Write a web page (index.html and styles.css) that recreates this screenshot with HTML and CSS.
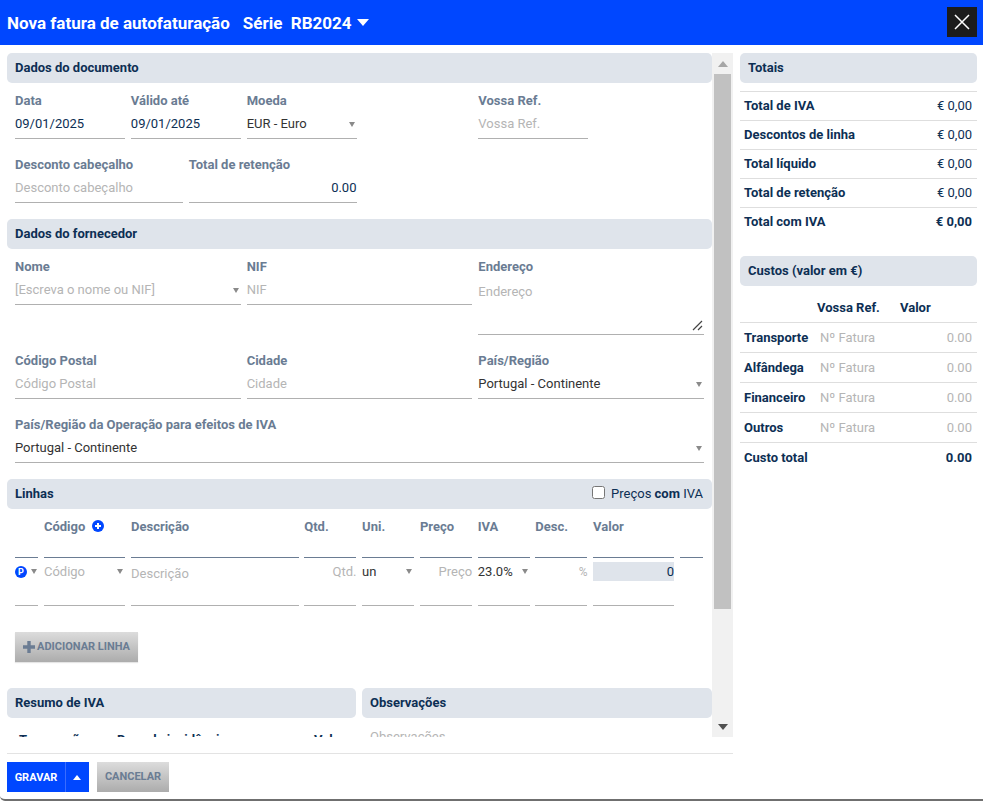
FILE: index.html
```html
<!DOCTYPE html>
<html lang="pt">
<head>
<meta charset="utf-8">
<title>Nova fatura de autofaturação</title>
<link rel="stylesheet" href="styles.css">
</head>
<body>
<div class="dialog">
  <header class="topbar">
    <div class="title">Nova fatura de autofaturação</div>
    <div class="series">Série&nbsp; RB2024</div>
    <svg class="series-caret" width="12" height="7" viewBox="0 0 12 7"><path d="M0 0h12L6 7z" fill="#fff"/></svg>
    <button class="close" type="button" aria-label="Fechar">
      <svg width="16" height="16" viewBox="0 0 16 16"><path d="M1 1l14 14M15 1L1 15" stroke="#fff" stroke-width="1.5" fill="none"/></svg>
    </button>
  </header>

  <div class="body">
    <div class="left">
      <div class="scroller">
        <div class="content">
          <section class="block">
            <h2 class="bar">Dados do documento</h2>
            <div class="grid">
              <div class="field s2"><div class="lab">Data</div><div class="val">09/01/2025</div></div>
              <div class="field s2"><div class="lab">Válido até</div><div class="val">09/01/2025</div></div>
              <div class="field s2"><div class="lab">Moeda</div><div class="val sel">EUR - Euro<i class="tri"></i></div></div>
              <div class="field skip2"><div class="lab">Vossa Ref.</div><div class="val ph">Vossa Ref.</div></div>
              <div class="field s3 first"><div class="lab">Desconto cabeçalho</div><div class="val ph">Desconto cabeçalho</div></div>
              <div class="field s3"><div class="lab">Total de retenção</div><div class="val num">0.00</div></div>
            </div>
          </section>

          <section class="block">
            <h2 class="bar">Dados do fornecedor</h2>
            <div class="grid">
              <div class="field s4"><div class="lab">Nome</div><div class="val ph">[Escreva o nome ou NIF]<i class="tri"></i></div></div>
              <div class="field s4"><div class="lab">NIF</div><div class="val ph">NIF</div></div>
              <div class="field s4"><div class="lab">Endereço</div>
                <div class="val ph area">Endereço
                  <svg class="grip" width="11" height="11" viewBox="0 0 11 11"><path d="M1 10L10 1M6 10l4-4" stroke="#444" stroke-width="1.2" fill="none"/></svg>
                </div>
              </div>
              <div class="field s4"><div class="lab">Código Postal</div><div class="val ph">Código Postal</div></div>
              <div class="field s4"><div class="lab">Cidade</div><div class="val ph">Cidade</div></div>
              <div class="field s4"><div class="lab">País/Região</div><div class="val sel">Portugal - Continente<i class="tri"></i></div></div>
              <div class="field s12"><div class="lab">País/Região da Operação para efeitos de IVA</div><div class="val sel">Portugal - Continente<i class="tri"></i></div></div>
            </div>
          </section>

          <section class="block block-lines">
            <div class="bar bar-split">
              <h2 class="bar-title">Linhas</h2>
              <label class="vat-toggle"><input class="check" type="checkbox"><span>Preços <b>com</b> IVA</span></label>
            </div>
            <div class="lines lines-head">
              <div class="lh"></div>
              <div class="lh">Código
                <svg class="plus" width="12" height="12" viewBox="0 0 12 12"><circle cx="6" cy="6" r="6" fill="#0047ff"/><path d="M6 3v6M3 6h6" stroke="#fff" stroke-width="2"/></svg>
              </div>
              <div class="lh">Descrição</div>
              <div class="lh">Qtd.</div>
              <div class="lh">Uni.</div>
              <div class="lh">Preço</div>
              <div class="lh">IVA</div>
              <div class="lh">Desc.</div>
              <div class="lh">Valor</div>
              <div class="lh"></div>
            </div>
            <div class="lines lines-row">
              <div class="lc lc-p"><span class="p-badge">P</span><i class="tri tri-p"></i></div>
              <div class="lc ph">Código<i class="tri"></i></div>
              <div class="lc ph lc-desc">Descrição</div>
              <div class="lc ph right">Qtd.</div>
              <div class="lc sel">un<i class="tri"></i></div>
              <div class="lc ph right">Preço</div>
              <div class="lc sel">23.0%<i class="tri"></i></div>
              <div class="lc ph right pct">%</div>
              <div class="lc lc-val"><span class="val-box">0</span></div>
            </div>
            <button class="grey-btn add" type="button">
              <svg width="12" height="12" viewBox="0 0 12 12"><path d="M6 0v12M0 6h12" stroke="#6b7c93" stroke-width="3.4"/></svg>
              <span>ADICIONAR LINHA</span>
            </button>
          </section>

          <section class="split">
            <div class="half half-a">
              <h2 class="bar">Resumo de IVA</h2>
              <div class="sum-head"><span>Transacção</span><span>Base de incidência</span><span>Valor</span></div>
            </div>
            <div class="half">
              <h2 class="bar">Observações</h2>
              <div class="obs ph">Observações</div>
            </div>
          </section>
        </div>
        <div class="scrollbar">
          <div class="sb-btn"><svg width="10" height="6" viewBox="0 0 10 6"><path d="M0 6h10L5 0z" fill="#a6a6a6"/></svg></div>
          <div class="sb-track"><div class="sb-thumb"></div></div>
          <div class="sb-btn"><svg width="10" height="6" viewBox="0 0 10 6"><path d="M0 0h10L5 6z" fill="#505050"/></svg></div>
        </div>
      </div>
      <footer class="foot">
        <div class="split-btn">
          <button class="save" type="button">GRAVAR</button>
          <button class="save-more" type="button" aria-label="Mais"><svg width="8" height="5" viewBox="0 0 8 5"><path d="M0 5h8L4 0z" fill="#fff"/></svg></button>
        </div>
        <button class="grey-btn cancel" type="button">CANCELAR</button>
      </footer>
    </div>

    <aside class="side">
      <h2 class="bar">Totais</h2>
      <div class="totals">
        <div class="t-row"><b>Total de IVA</b><span>€ 0,00</span></div>
        <div class="t-row"><b>Descontos de linha</b><span>€ 0,00</span></div>
        <div class="t-row"><b>Total líquido</b><span>€ 0,00</span></div>
        <div class="t-row"><b>Total de retenção</b><span>€ 0,00</span></div>
        <div class="t-row t-last"><b>Total com IVA</b><b>€ 0,00</b></div>
      </div>
      <h2 class="bar costs-bar">Custos (valor em €)</h2>
      <div class="costs">
        <div class="c-head"><span></span><b>Vossa Ref.</b><b>Valor</b></div>
        <div class="c-row"><b>Transporte</b><span class="ph">Nº Fatura</span><span class="ph right">0.00</span></div>
        <div class="c-row"><b>Alfândega</b><span class="ph">Nº Fatura</span><span class="ph right">0.00</span></div>
        <div class="c-row"><b>Financeiro</b><span class="ph">Nº Fatura</span><span class="ph right">0.00</span></div>
        <div class="c-row"><b>Outros</b><span class="ph">Nº Fatura</span><span class="ph right">0.00</span></div>
        <div class="c-total"><b>Custo total</b><b>0.00</b></div>
      </div>
    </aside>
  </div>
</div>
</body>
</html>
```

FILE: styles.css
```css
* { box-sizing: border-box; }
html, body { margin: 0; height: 100%; background: #fff; }
body { font: 13px/16px Roboto, "Liberation Sans", sans-serif; color: #0d2f54; overflow: hidden; }
h2 { margin: 0; font: inherit; }
b { font-weight: 700; }

.dialog { width: 983px; height: 801px; display: flex; flex-direction: column; background: #fff; border-bottom: 2px solid #6f6f6f; border-bottom-left-radius: 5px; overflow: hidden; }

.topbar { height: 45px; flex: none; background: #0047ff; color: #fff; display: flex; align-items: center; padding: 0 6px 0 7px; font-size: 17px; font-weight: 700; }
.series { margin-left: 13px; }
.series-caret { margin-left: 5px; }
.close { margin-left: auto; width: 30px; height: 30px; margin-top: -1px; background: #1c1c1c; border: 0; padding: 0; display: flex; align-items: center; justify-content: center; }

.body { flex: 1; display: flex; min-height: 0; }
.left { width: 733px; flex: none; display: flex; flex-direction: column; padding-left: 7px; }
.scroller { height: 692px; display: flex; flex: none; overflow: hidden; }
.content { width: 705px; flex: none; padding-top: 8px; overflow: hidden; }

.scrollbar { width: 21px; flex: none; margin-top: 8px; background: #f1f1f1; display: flex; flex-direction: column; }
.sb-btn { height: 21px; flex: none; display: flex; align-items: center; justify-content: center; }
.sb-track { flex: 1; padding: 0 2px; }
.sb-thumb { height: 535px; background: #c1c1c1; }

.bar { height: 30px; background: #dfe4eb; border-radius: 5px; padding: 0 8px; display: flex; align-items: center; font-weight: 700; color: #0d2f54; }
.bar-split { justify-content: space-between; padding-right: 9px; }
.vat-toggle { display: flex; align-items: center; font-weight: 400; }
.check { margin: 0 6px 3px 0; width: 13px; height: 13px; }

.block { margin-bottom: 16px; }
.block-lines { margin-bottom: 0; }
.grid { display: grid; grid-template-columns: repeat(12, minmax(0, 1fr)); column-gap: 6px; row-gap: 18px; padding: 10px 8px 0 8px; }
.s2 { grid-column: span 2; }
.s3 { grid-column: span 3; }
.s4 { grid-column: span 4; }
.s12 { grid-column: span 12; }
.skip2 { grid-column: 9 / span 2; }
.first { grid-column: 1 / span 3; }

.lab { height: 16px; font-weight: 700; color: #6a7c93; white-space: nowrap; }
.val { height: 30px; border-bottom: 1px solid #b0b0b0; display: flex; align-items: center; position: relative; white-space: nowrap; }
.area { height: 60px; align-items: flex-start; padding-top: 9px; }
.grip { position: absolute; right: 1px; bottom: 3px; }
.ph { color: #b5b5b5; }
.sel { color: #333; }
.num { justify-content: flex-end; }
.right { justify-content: flex-end; text-align: right; }

.tri { position: absolute; right: 2px; top: 50%; margin-top: -2px; width: 0; height: 0; border-left: 3.5px solid transparent; border-right: 3.5px solid transparent; border-top: 5px solid #8a8a8a; }

.lines { display: grid; grid-template-columns: 23.3px 81.4px 167.6px 52.2px 52.2px 52.2px 51.8px 52.2px 81px 23.4px; column-gap: 5.66px; padding-left: 8px; }
.lines-head { padding-top: 10px; }
.lh { height: 39px; border-bottom: 1px solid #6a7c93; font-weight: 700; color: #6a7c93; white-space: nowrap; }
.plus { vertical-align: -1px; margin-left: 3px; }
.lines-row { height: 48px; }
.lc { height: 48px; border-bottom: 1px solid #b0b0b0; position: relative; display: flex; align-items: flex-start; padding-top: 6px; }
.lc .tri { top: 11px; margin-top: 0; }
.p-badge { width: 12px; height: 12px; border-radius: 50%; background: #0047ff; color: #fff; font-size: 9px; font-weight: 700; line-height: 12px; text-align: center; margin-top: 2px; }
.lc .tri-p { right: 1px; }
.lc-desc { padding-top: 8px; }
.lc-val { padding-top: 4px; display: block; }
.val-box { display: block; height: 19px; line-height: 19px; background: #dfe4eb; text-align: right; }
.pct { font-size: 12px; }

.grey-btn { height: 30px; border: 0; padding: 0; background: linear-gradient(#dcdcdc, #acacac); color: #6a7c93; font: 700 11px/30px Roboto, "Liberation Sans", sans-serif; display: inline-flex; align-items: center; justify-content: center; }
.add { width: 123px; margin: 26px 0 0 8px; gap: 2px; display: flex; box-shadow: 0 1px 1px rgba(0,0,0,.1); }

.split { display: flex; gap: 6px; margin-top: 26px; }
.half { width: 350px; flex: none; }
.half-a { width: 349px; }
.sum-head { display: grid; grid-template-columns: 98px 197px 40px; padding: 14px 0 0 12px; font-weight: 700; white-space: nowrap; }
.obs { padding: 11px 0 0 8px; }

.foot { flex: none; margin-top: 16px; border-top: 1px solid #e3e3e3; padding-top: 8px; display: flex; gap: 8px; }
.split-btn { display: flex; height: 30px; }
.save { width: 58px; height: 30px; border: 0; padding: 0; background: #0047ff; color: #fff; font: 700 11px Roboto, "Liberation Sans", sans-serif; }
.save-more { width: 24px; height: 30px; border: 0; border-left: 1px solid #3a6cff; padding: 0 2px 0 0; background: #0047ff; display: flex; align-items: center; justify-content: center; }
.cancel { width: 72px; }

.side { width: 237px; margin-left: 7px; padding-top: 8px; flex: none; }
.totals { margin-top: 8px; border-top: 1px solid #dedede; }
.t-row { height: 29px; display: flex; align-items: center; justify-content: space-between; padding: 0 5px 0 4px; border-bottom: 1px solid #dedede; }
.t-last { border-bottom: 0; padding-bottom: 1px; }
.costs-bar { margin-top: 19px; }
.c-head, .c-row { display: grid; align-items: center; padding: 0 5px 0 4px; }
.c-head { grid-template-columns: 73px 83px 1fr; height: 37px; padding-top: 7px; border-bottom: 1px solid #dedede; }
.c-row { grid-template-columns: 76px 83px 1fr; height: 30px; border-bottom: 1px solid #dedede; }
.c-total { height: 30px; display: flex; align-items: center; justify-content: space-between; padding: 0 5px 0 4px; }
```
